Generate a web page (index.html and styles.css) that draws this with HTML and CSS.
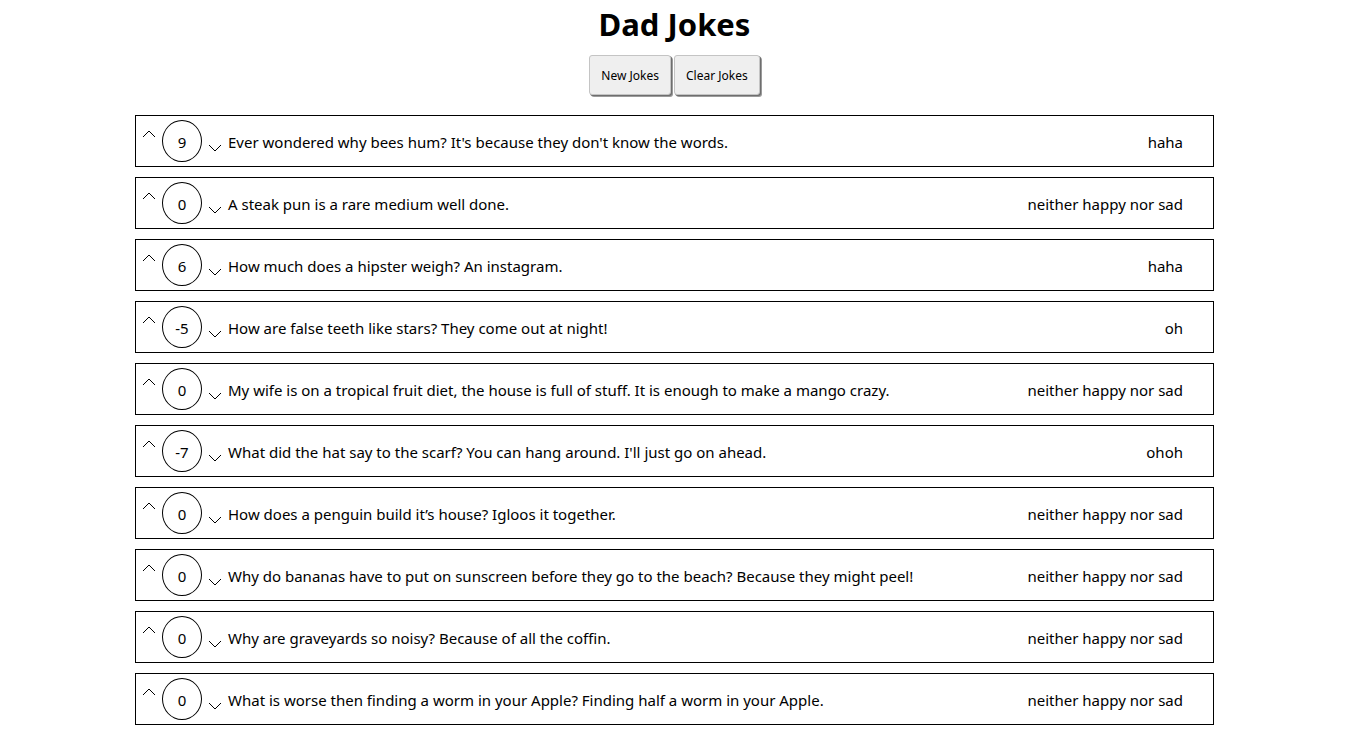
FILE: index.html
```html
<!DOCTYPE html>
<html>
<head>
<meta charset="utf-8">
<link rel="stylesheet" href="styles.css">
</head>
<body>
<h1 class="title">Dad Jokes</h1>
<div class="actions">
  <button class="btn">New Jokes</button>
  <button class="btn">Clear Jokes</button>
</div>
<div class="list">
  <div class="joke"><svg class="up" viewBox="0 0 14 8"><path d="M1 7 L7 1 L13 7"/></svg><span class="score">9</span><svg class="down" viewBox="0 0 14 8"><path d="M1 1 L7 7 L13 1"/></svg><span class="text">Ever wondered why bees hum? It's because they don't know the words.</span><span class="mood">haha</span></div>
  <div class="joke"><svg class="up" viewBox="0 0 14 8"><path d="M1 7 L7 1 L13 7"/></svg><span class="score">0</span><svg class="down" viewBox="0 0 14 8"><path d="M1 1 L7 7 L13 1"/></svg><span class="text">A steak pun is a rare medium well done.</span><span class="mood">neither happy nor sad</span></div>
  <div class="joke"><svg class="up" viewBox="0 0 14 8"><path d="M1 7 L7 1 L13 7"/></svg><span class="score">6</span><svg class="down" viewBox="0 0 14 8"><path d="M1 1 L7 7 L13 1"/></svg><span class="text">How much does a hipster weigh? An instagram.</span><span class="mood">haha</span></div>
  <div class="joke"><svg class="up" viewBox="0 0 14 8"><path d="M1 7 L7 1 L13 7"/></svg><span class="score">-5</span><svg class="down" viewBox="0 0 14 8"><path d="M1 1 L7 7 L13 1"/></svg><span class="text">How are false teeth like stars? They come out at night!</span><span class="mood">oh</span></div>
  <div class="joke"><svg class="up" viewBox="0 0 14 8"><path d="M1 7 L7 1 L13 7"/></svg><span class="score">0</span><svg class="down" viewBox="0 0 14 8"><path d="M1 1 L7 7 L13 1"/></svg><span class="text">My wife is on a tropical fruit diet, the house is full of stuff. It is enough to make a mango crazy.</span><span class="mood">neither happy nor sad</span></div>
  <div class="joke"><svg class="up" viewBox="0 0 14 8"><path d="M1 7 L7 1 L13 7"/></svg><span class="score">-7</span><svg class="down" viewBox="0 0 14 8"><path d="M1 1 L7 7 L13 1"/></svg><span class="text">What did the hat say to the scarf? You can hang around. I'll just go on ahead.</span><span class="mood">ohoh</span></div>
  <div class="joke"><svg class="up" viewBox="0 0 14 8"><path d="M1 7 L7 1 L13 7"/></svg><span class="score">0</span><svg class="down" viewBox="0 0 14 8"><path d="M1 1 L7 7 L13 1"/></svg><span class="text">How does a penguin build it’s house? Igloos it together.</span><span class="mood">neither happy nor sad</span></div>
  <div class="joke"><svg class="up" viewBox="0 0 14 8"><path d="M1 7 L7 1 L13 7"/></svg><span class="score">0</span><svg class="down" viewBox="0 0 14 8"><path d="M1 1 L7 7 L13 1"/></svg><span class="text">Why do bananas have to put on sunscreen before they go to the beach? Because they might peel!</span><span class="mood">neither happy nor sad</span></div>
  <div class="joke"><svg class="up" viewBox="0 0 14 8"><path d="M1 7 L7 1 L13 7"/></svg><span class="score">0</span><svg class="down" viewBox="0 0 14 8"><path d="M1 1 L7 7 L13 1"/></svg><span class="text">Why are graveyards so noisy? Because of all the coffin.</span><span class="mood">neither happy nor sad</span></div>
  <div class="joke"><svg class="up" viewBox="0 0 14 8"><path d="M1 7 L7 1 L13 7"/></svg><span class="score">0</span><svg class="down" viewBox="0 0 14 8"><path d="M1 1 L7 7 L13 1"/></svg><span class="text">What is worse then finding a worm in your Apple? Finding half a worm in your Apple.</span><span class="mood">neither happy nor sad</span></div>
</div>
</body>
</html>
```
FILE: styles.css
```css
html, body {
  margin: 0;
  padding: 0;
  background: #fff;
  color: #000;
  font-family: "Noto Sans", "Open Sans", sans-serif;
}
.title {
  margin: 0;
  padding-top: 4px;
  height: 51px;
  text-align: center;
  font-size: 31px;
  font-weight: 700;
  line-height: 40px;
}
.actions {
  display: flex;
  justify-content: center;
  gap: 3px;
  margin-bottom: 20px;
}
.btn {
  height: 40px;
  padding: 0 11px;
  background: #efefef;
  border: 1px solid #c4c4c4;
  border-radius: 3px;
  box-shadow: 1px 1px 0 #6e6e6e, 2px 2px 0 #9a9a9a;
  font-family: "Noto Sans", sans-serif;
  font-size: 12px;
  color: #000;
}
.list {
  width: 1079px;
  margin: 0 auto;
  display: flex;
  flex-direction: column;
  gap: 10px;
}
.joke {
  height: 50px;
  border: 1px solid #000;
  display: flex;
  align-items: center;
  padding: 0 30px 0 6px;
  font-size: 15px;
}
.text, .mood {
  padding-top: 2px;
}
.up, .down {
  width: 14px;
  height: 8px;
  fill: none;
  stroke: #000;
  stroke-width: 1;
}
.up {
  margin-top: -14px;
}
.down {
  margin-top: 14px;
  margin-left: 6px;
  margin-right: 6px;
}
.score {
  width: 38px;
  height: 39px;
  margin-left: 6px;
  border: 1px solid #000;
  border-radius: 50%;
  display: flex;
  align-items: center;
  justify-content: center;
  font-size: 15px;
  padding-top: 1px;
  box-sizing: content-box;
}
.mood {
  margin-left: auto;
}
```
